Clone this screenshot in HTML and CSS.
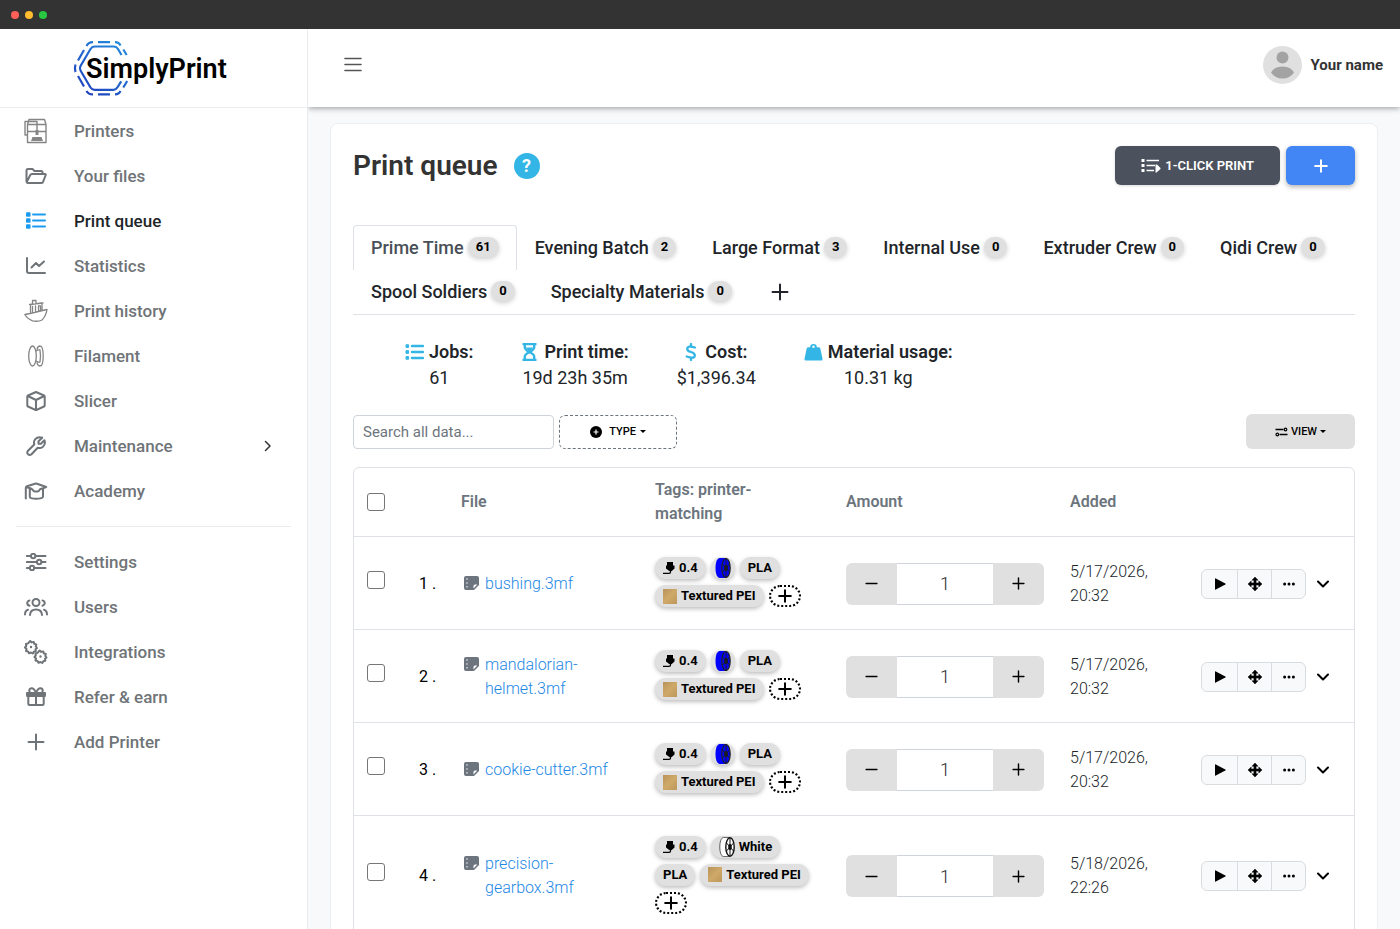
FILE: index.html
```html
<!DOCTYPE html>
<html lang="en">
<head>
    <meta charset="UTF-8" />
    <meta name="viewport" content="width=device-width, initial-scale=1.0" />
    <title>SimplyPrint - Print queue</title>
    <link rel="stylesheet" href="styles.css">
</head>
<body>
    <!-- Shared icons -->
    <svg class="sprite" aria-hidden="true">
        <symbol id="i-list" viewBox="0 0 20 18">
            <path d="M1 1.200h2.600v2.600H1zM1 7.200h2.600v2.600H1zM1 13.200h2.600v2.600H1z" fill="currentColor" stroke="currentColor" stroke-linejoin="round"/>
            <path d="M7 2.500h12M7 8.500h12M7 14.500h12" fill="none" stroke="currentColor" stroke-width="2" stroke-linecap="round"/>
        </symbol>
        <symbol id="i-list-bold" viewBox="0 0 19 16">
            <path d="M1 .8h2.600v2.600H1zM1 6.700h2.600v2.600H1zM1 12.600h2.600v2.600H1z" fill="currentColor" stroke="currentColor" stroke-linejoin="round"/>
            <path d="M7 2h11M7 8h11M7 14h11" fill="none" stroke="currentColor" stroke-width="2.500" stroke-linecap="round"/>
        </symbol>
        <symbol id="i-plus" viewBox="0 0 18 18">
            <path d="M9 1.500v15M1.500 9h15" fill="none" stroke="currentColor" stroke-width="2" stroke-linecap="round"/>
        </symbol>
        <symbol id="i-plus-bold" viewBox="0 0 18 18">
            <path d="M9 1.500v15M1.500 9h15" fill="none" stroke="currentColor" stroke-width="2.600" stroke-linecap="round"/>
        </symbol>
        <symbol id="i-minus" viewBox="0 0 18 18">
            <path d="M1.500 9h15" fill="none" stroke="currentColor" stroke-width="2" stroke-linecap="round"/>
        </symbol>
        <symbol id="i-file" viewBox="0 0 15 14">
            <path d="M2 0h11a2 2 0 0 1 2 2v7l-5 5H2a2 2 0 0 1-2-2V2a2 2 0 0 1 2-2z" fill="#6c757d"/>
            <path d="M13.300 8.500H11A1.500 1.500 0 0 0 9.500 10v2.500z" fill="#fff"/>
            <path d="M2.500 2.300h1v1.500h-1zM2.500 6.200h1v1.500h-1zM2.500 10.100h1v1.500h-1z" fill="#fff"/>
        </symbol>
        <symbol id="i-nozzle" viewBox="0 0 12 14">
            <path d="M4 1h6v3.500h1.500v3L8.800 10H6.200L3 7.500v-3h1z" fill="#000"/>
            <path d="M7.500 9.500V11q0 1.400-1.500 1.400H0" fill="none" stroke="#000" stroke-width="1.300"/>
        </symbol>
        <symbol id="i-spool-blue" viewBox="0 0 16 20">
            <path d="M4.500 0H11v20H4.500C1.500 19 .5 15 .5 10s1-9 4-10z" fill="#00f"/>
            <ellipse cx="11" cy="10" rx="4.200" ry="9.500" fill="#00f" stroke="#222" stroke-width="1.200"/>
            <ellipse cx="11" cy="10" rx="1.800" ry="3" fill="#111"/>
            <path d="M11 1v18M7.500 6l7 8M14.500 6l-7 8" stroke="#222" stroke-width="1"/>
        </symbol>
        <symbol id="i-spool-white" viewBox="0 0 16 20">
            <path d="M11 .4H4.500C2 1 .8 5 .8 10s1.200 9 3.700 9.600H11" fill="#fff" stroke="#333" stroke-width=".8"/>
            <ellipse cx="11" cy="10" rx="4.200" ry="9.300" fill="#fff" stroke="#111" stroke-width="1.400"/>
            <ellipse cx="11" cy="10" rx="1.800" ry="3" fill="#111"/>
            <path d="M11 1v18M7.500 6l7 8M14.500 6l-7 8" stroke="#111" stroke-width="1"/>
        </symbol>
        <symbol id="i-play" viewBox="0 0 12 12">
            <path d="M1 .8Q1 0 1.800.400l9.500 5q.8.600 0 1.200l-9.500 5Q1 12 1 11.200z" fill="#000"/>
        </symbol>
        <symbol id="i-move" viewBox="0 0 14 14">
            <path d="M7 0l3 3.200H8.100v2.700h2.700V4L14 7l-3.200 3V8.100H8.100v2.700H10L7 14l-3-3.200h1.900V8.100H3.200V10L0 7l3.200-3v1.900h2.700V3.200H4z" fill="#000" stroke="#000" stroke-width=".5" stroke-linejoin="round"/>
        </symbol>
        <symbol id="i-dots" viewBox="0 0 12 4">
            <circle cx="1.600" cy="2" r="1.500"/><circle cx="6" cy="2" r="1.500"/><circle cx="10.400" cy="2" r="1.500"/>
        </symbol>
        <symbol id="i-down" viewBox="0 0 12 8">
            <path d="M1 1.500l5 5 5-5" fill="none" stroke="#000" stroke-width="2" stroke-linecap="round" stroke-linejoin="round"/>
        </symbol>
    </svg>

    <div class="window-bar">
        <span class="dot red"></span>
        <span class="dot yellow"></span>
        <span class="dot green"></span>
    </div>

    <div class="app">
        <aside class="sidebar">
            <a href="#" class="logo">
                <svg width="160" height="60" viewBox="70 38 160 60" role="img" aria-label="SimplyPrint">
                    <defs>
                        <linearGradient id="logo-grad" gradientUnits="userSpaceOnUse" x1="84" y1="94" x2="120" y2="44">
                            <stop offset="0" stop-color="#1f3fbd"/>
                            <stop offset="1" stop-color="#2389dc"/>
                        </linearGradient>
                    </defs>
                    <g fill="none" stroke="url(#logo-grad)" stroke-width="2.200">
                        <path d="M121.500 55l-3.500-6q-1.500-2.500-4-2.500H94.500q-2.500 0-4 2.500L80.500 66q-1.300 2.300 0 4.500l10 17q1.500 2.300 4 2.300h19q2.500 0 4-2.500l3.700-6"/>
                        <path d="M98 42.100h12M86.500 46q2-4 6.500-3.900M115 42.100q4 0 5.500 3.400M123.300 49.500l3.400 5.500M84 50l-6 10.500M75.500 64.500q-1.300 4 0 7.500M78 76l6 10.500M86.500 91q2 3.500 6.500 3.400M98 94.400h12M115 94.400q4 0 5.500-3.400M123.300 87.500l3.900-6.500"/>
                    </g>
                    <text x="86" y="78" class="logo-text">SimplyPrint</text>
                </svg>
            </a>

            <nav class="menu">
                <a href="#">
                    <svg class="soft" viewBox="0 0 24 26" width="24" height="26"><path d="M3.500 6.500h18.500v18H3.500zM3.500 6.500L5 1.500h15.500l1.500 5M3.500 13.500H22M3 17H1V3.500h12V12" stroke-width="1.400"/><path d="M11.500 12h3v5h-3zM8.500 19h9l1.500 4H7z" fill="currentColor" stroke="none"/></svg>
                    <span>Printers</span>
                </a>
                <a href="#">
                    <svg viewBox="0 0 22 18" width="22" height="18"><path d="M1.500 14.500v-11Q1.500 2 3 2h4.500l2 2h6.500q1.500 0 1.500 1.500V7M1.700 15l3.600-7q.5-1 1.500-1H20q1 0 .7 1l-2.500 6.500q-.4 1.500-1.700 1.500H3q-1.300 0-1.500-1.500"/></svg>
                    <span>Your files</span>
                </a>
                <a href="#" class="active">
                    <svg class="blue" width="20" height="18"><use href="#i-list"/></svg>
                    <span>Print queue</span>
                </a>
                <a href="#">
                    <svg viewBox="0 0 20 18" width="20" height="18"><path d="M1 1v13q0 2 2 2h16M5.500 10.500L10 6l3 3 5-4.500"/></svg>
                    <span>Statistics</span>
                </a>
                <a href="#">
                    <svg class="soft" viewBox="0 0 24 24" width="24" height="24"><path d="M.8 15.500L6 14.500l17-4q-1 6.500-5 10.500-4 2-9.500.8Q3 19.500.8 15.500zM6.500 14V5.500L18 4v7.500M5.500 5.500L19 4M8.500 5V1.500h3.500v3M8.500 7.500v6M11.500 7v6M14.500 6.800h2v5h-2z" stroke-width="1.300"/></svg>
                    <span>Print history</span>
                </a>
                <a href="#">
                    <svg class="soft" viewBox="0 0 16 22" width="16" height="22"><ellipse cx="4.500" cy="11" rx="3.800" ry="10" stroke-width="1.300"/><path d="M8 6q2-1.500 4-1 1 6 0 12-2 .5-4-1M9 4q1-3 3-3 3.200 0 3.200 10T12 21q-2 0-3-3" stroke-width="1.300"/></svg>
                    <span>Filament</span>
                </a>
                <a href="#">
                    <svg viewBox="0 0 20 20" width="20" height="20"><path d="M10 1l8 3.500q.7.300.7 1v9q0 .7-.7 1L10 19.200l-8-3.700q-.7-.3-.7-1v-9q0-.7.7-1zM1.800 5L10 9l8.200-4M10 9v10"/></svg>
                    <span>Slicer</span>
                </a>
                <a href="#">
                    <svg viewBox="0 0 20 20" width="20" height="20"><path d="M16.200 1.700L12.500 5.300v2.400h2.400l3.500-3.500q1.500 4.300-1.700 6.800-2.300 1.700-5 .7l-6.200 6.500q-1.800 1.500-3.500 0-1.500-1.700 0-3.500L8.300 8.500Q7.300 5.500 9.300 3.200q2.700-3 6.900-1.500z"/></svg>
                    <span>Maintenance</span>
                    <svg class="caret" viewBox="0 0 8 12" width="8" height="12"><path d="M1.500 1.500L6 6l-4.500 4.500"/></svg>
                </a>
                <a href="#">
                    <svg viewBox="0 0 24 18" width="24" height="18"><path d="M1.800 16.500V6q0-1.300 1.200-1.700l8-2.600q1-.3 2 0L22.200 5 19 6.200M5.800 6v8.500q0 1.300 1.200 1.600 5 1.500 10.500 0 1.500-.4 1.500-1.600V6.200M3 5.200l4.500 1.600q1.300.8 2 2 2.500 1.500 5.500 0l1-1.500 3-1.100"/></svg>
                    <span>Academy</span>
                </a>
            </nav>

            <hr class="menu-line">

            <nav class="menu">
                <a href="#">
                    <svg viewBox="0 0 20 18" width="20" height="18"><path d="M.8 3h4M9.500 3h10M.8 9h10M15.500 9h4M.8 15h2.500M8.500 15h11"/><circle cx="7.200" cy="3" r="2.200"/><circle cx="13.200" cy="9" r="2.200"/><circle cx="6" cy="15" r="2.200"/></svg>
                    <span>Settings</span>
                </a>
                <a href="#">
                    <svg viewBox="0 0 24 18" width="24" height="18"><circle cx="12" cy="4.500" r="3.500"/><path d="M6 17q.3-5.500 6-5.500t6 5.500M5.500 7.800Q3 7 3.300 4.700 3.500 2.800 5.500 2.500M18.500 7.800q2.500-.8 2.200-3.100-.2-1.900-2.200-2.200M1 16.500q0-4 3-4.800M23 16.500q0-4-3-4.800"/></svg>
                    <span>Users</span>
                </a>
                <a href="#">
                    <svg viewBox="0 0 24 24" width="24" height="24"><g id="gear"><path d="M6.200 1.500l1.500 1.400 2-.5.600 2 2 .6-.5 2L13 8.500l-1.500 1.200.3 2-2 .5-1 1.800-1.800-1-2 .8-1-1.800-2-.5.500-2L1 8l1.300-1.500-.3-2 2-.6z" transform="translate(0 -.5)"/><circle cx="7" cy="7" r=".6" stroke-width="1.200"/></g><use href="#gear" x="9.500" y="9.500"/></svg>
                    <span>Integrations</span>
                </a>
                <a href="#">
                    <svg viewBox="0 0 20 20" width="20" height="20"><path d="M1.200 6h17.600v3H1.200zM2.300 9v7.500q0 1.500 1.500 1.500h12.400q1.500 0 1.500-1.500V9M10 6v12M10 6Q8 1 5.500 1.200 3 1.500 3.300 4q.2 1.500 1.700 2M10 6q2-5 4.500-4.800Q17 1.500 16.700 4q-.2 1.500-1.700 2"/><path d="M1.200 6h17.600v2.500H1.200z" fill="currentColor"/></svg>
                    <span>Refer &amp; earn</span>
                </a>
                <a href="#">
                    <svg width="18" height="18"><use href="#i-plus"/></svg>
                    <span>Add Printer</span>
                </a>
            </nav>
        </aside>

        <div class="main">
            <header class="topbar">
                <button class="hamburger" aria-label="Toggle menu">
                    <svg viewBox="0 0 18 16" width="18" height="16"><path d="M1 1.500h16M1 7.500h16M1 13.500h16" fill="none" stroke="#555" stroke-width="1.600" stroke-linecap="round"/></svg>
                </button>
                <a href="#" class="user">
                    <svg viewBox="0 0 39 38" width="39" height="38"><ellipse cx="19.500" cy="19" rx="19.500" ry="19" fill="#e0e0e0"/><circle cx="19.500" cy="11.500" r="6" fill="#a3a3a3"/><path d="M8 26.500Q11 20.500 19.500 20.500T31 26.500Q27 32.500 19.500 32.500T8 26.500z" fill="#a3a3a3"/></svg>
                    <span>Your name</span>
                </a>
            </header>

            <main class="card">
                <div class="card-head">
                    <h1>Print queue</h1>
                    <button class="help" aria-label="Help">?</button>
                    <div class="head-buttons">
                        <button class="btn-dark">
                            <svg viewBox="0 0 20 15" width="20" height="15"><path d="M.5 1h3v3h-3zM.5 6h3v3h-3zM.5 11h3v3h-3z" fill="#fff"/><path d="M5.500 2.500H18M5.500 7.500H14M5.500 12.500H13" stroke="#fff" stroke-width="1.500"/><path d="M14.500 6.500h1.500l3.500 3.500v1L15.500 14.500h-1z" fill="#fff"/></svg>
                            1-CLICK PRINT
                        </button>
                        <button class="btn-blue" aria-label="Add">
                            <svg width="14" height="14"><use href="#i-plus-bold"/></svg>
                        </button>
                    </div>
                </div>

                <div class="tabs">
                    <a href="#" class="tab active">Prime Time <span class="badge">61</span></a>
                    <a href="#" class="tab">Evening Batch <span class="badge">2</span></a>
                    <a href="#" class="tab">Large Format <span class="badge">3</span></a>
                    <a href="#" class="tab">Internal Use <span class="badge">0</span></a>
                    <a href="#" class="tab">Extruder Crew <span class="badge">0</span></a>
                    <a href="#" class="tab">Qidi Crew <span class="badge">0</span></a>
                    <a href="#" class="tab">Spool Soldiers <span class="badge">0</span></a>
                    <a href="#" class="tab">Specialty Materials <span class="badge">0</span></a>
                    <button class="tab tab-add" aria-label="Add queue"><svg width="18" height="18"><use href="#i-plus"/></svg></button>
                </div>

                <div class="stats">
                    <div class="stat">
                        <strong><svg width="19" height="16"><use href="#i-list-bold"/></svg>Jobs:</strong>
                        <span>61</span>
                    </div>
                    <div class="stat">
                        <strong><svg class="wide" viewBox="0 0 14 18" width="15" height="18"><path d="M0 0h14v2.300H0zM0 15.700h14V18H0z" fill="currentColor"/><path d="M2.300 2v2.500q0 2 4.700 4.500-4.700 2.500-4.700 4.500V16M11.700 2v2.500q0 2-4.700 4.500 4.700 2.500 4.700 4.500V16" fill="none" stroke="currentColor" stroke-width="2.400"/><path d="M3 4.500h8L7 8.500z" fill="currentColor"/></svg>Print time:</strong>
                        <span>19d 23h 35m</span>
                    </div>
                    <div class="stat">
                        <strong><svg class="wide" viewBox="0 0 12 18" width="12" height="18"><path d="M6 1v2.200M6 14.800V17M10 4.500Q2.300 2 2.200 6q0 2 3.800 3t3.800 3.200q-.2 4.300-8 1.300" fill="none" stroke="currentColor" stroke-width="2.300" stroke-linecap="round"/></svg>Cost:</strong>
                        <span>$1,396.34</span>
                    </div>
                    <div class="stat">
                        <strong><svg viewBox="0 0 20 18" width="19" height="18"><path d="M6.500 4a3.500 3.500 0 1 1 7 0h2q1.200 0 1.600 1l2.400 11q.3 2-1.500 2H2Q.2 18 .5 16L2.900 5q.4-1 1.600-1zM10 2.200a1.300 1.300 0 1 0 0 2.600 1.300 1.300 0 0 0 0-2.600z" fill="currentColor" fill-rule="evenodd"/></svg>Material usage:</strong>
                        <span>10.31 kg</span>
                    </div>
                </div>

                <div class="filters">
                    <input type="text" class="search" placeholder="Search all data..." aria-label="Search all data">
                    <button class="btn-type">
                        <svg viewBox="0 0 12 12" width="12" height="12"><circle cx="6" cy="6" r="6"/><path d="M6 3.500v5M3.500 6h5" stroke="#fff" stroke-width="1.200"/></svg>
                        TYPE
                        <span class="arrow"></span>
                    </button>
                    <button class="btn-view">
                        <svg viewBox="0 0 13 10" width="13" height="10"><path d="M.5 2.500h8M4.500 7.500h8" stroke="#000" stroke-width="1.300"/><circle cx="10.500" cy="2.500" r="1.300" fill="none" stroke="#000" stroke-width="1.200"/><circle cx="2.300" cy="7.500" r="1.300" fill="none" stroke="#000" stroke-width="1.200"/></svg>
                        VIEW
                        <span class="arrow"></span>
                    </button>
                </div>

                <div class="table-wrap">
                    <table>
                        <colgroup>
                            <col class="c-check"><col class="c-num"><col class="c-file"><col class="c-tags"><col class="c-amount"><col class="c-added"><col class="c-actions">
                        </colgroup>
                        <thead>
                            <tr>
                                <th><input type="checkbox" aria-label="Select all"></th>
                                <th></th>
                                <th>File</th>
                                <th class="th-tags">Tags: printer-matching</th>
                                <th>Amount</th>
                                <th>Added</th>
                                <th></th>
                            </tr>
                        </thead>
                        <tbody>
                            <tr>
                                <td><input type="checkbox" aria-label="Select bushing.3mf"></td>
                                <td class="num">1 .</td>
                                <td><div class="file"><svg width="15" height="14"><use href="#i-file"/></svg><a href="#">bushing.3mf</a></div></td>
                                <td>
                                    <div class="tags">
                                        <span class="tag"><svg width="12" height="14"><use href="#i-nozzle"/></svg>0.4</span>
                                        <span class="tag spool"><svg width="16" height="20"><use href="#i-spool-blue"/></svg></span>
                                        <span class="tag">PLA</span>
                                        <span class="tag"><i class="plate"></i>Textured PEI</span>
                                        <button class="tag-add" aria-label="Add tag"><svg width="14" height="14"><use href="#i-plus-bold"/></svg></button>
                                    </div>
                                </td>
                                <td>
                                    <div class="amount">
                                        <button aria-label="Less"><svg width="13" height="13"><use href="#i-minus"/></svg></button>
                                        <input type="text" value="1" aria-label="Amount">
                                        <button aria-label="More"><svg width="13" height="13"><use href="#i-plus"/></svg></button>
                                    </div>
                                </td>
                                <td class="added">5/17/2026, 20:32</td>
                                <td>
                                    <div class="actions">
                                        <div class="group">
                                            <button aria-label="Print"><svg width="12" height="12"><use href="#i-play"/></svg></button>
                                            <button aria-label="Move"><svg width="14" height="14"><use href="#i-move"/></svg></button>
                                            <button aria-label="More actions"><svg width="12" height="4"><use href="#i-dots"/></svg></button>
                                        </div>
                                        <button class="expand" aria-label="Expand"><svg width="12" height="8"><use href="#i-down"/></svg></button>
                                    </div>
                                </td>
                            </tr>
                            <tr>
                                <td><input type="checkbox" aria-label="Select mandalorian-helmet.3mf"></td>
                                <td class="num">2 .</td>
                                <td><div class="file"><svg width="15" height="14"><use href="#i-file"/></svg><a href="#">mandalorian-helmet.3mf</a></div></td>
                                <td>
                                    <div class="tags">
                                        <span class="tag"><svg width="12" height="14"><use href="#i-nozzle"/></svg>0.4</span>
                                        <span class="tag spool"><svg width="16" height="20"><use href="#i-spool-blue"/></svg></span>
                                        <span class="tag">PLA</span>
                                        <span class="tag"><i class="plate"></i>Textured PEI</span>
                                        <button class="tag-add" aria-label="Add tag"><svg width="14" height="14"><use href="#i-plus-bold"/></svg></button>
                                    </div>
                                </td>
                                <td>
                                    <div class="amount">
                                        <button aria-label="Less"><svg width="13" height="13"><use href="#i-minus"/></svg></button>
                                        <input type="text" value="1" aria-label="Amount">
                                        <button aria-label="More"><svg width="13" height="13"><use href="#i-plus"/></svg></button>
                                    </div>
                                </td>
                                <td class="added">5/17/2026, 20:32</td>
                                <td>
                                    <div class="actions">
                                        <div class="group">
                                            <button aria-label="Print"><svg width="12" height="12"><use href="#i-play"/></svg></button>
                                            <button aria-label="Move"><svg width="14" height="14"><use href="#i-move"/></svg></button>
                                            <button aria-label="More actions"><svg width="12" height="4"><use href="#i-dots"/></svg></button>
                                        </div>
                                        <button class="expand" aria-label="Expand"><svg width="12" height="8"><use href="#i-down"/></svg></button>
                                    </div>
                                </td>
                            </tr>
                            <tr>
                                <td><input type="checkbox" aria-label="Select cookie-cutter.3mf"></td>
                                <td class="num">3 .</td>
                                <td><div class="file"><svg width="15" height="14"><use href="#i-file"/></svg><a href="#">cookie-cutter.3mf</a></div></td>
                                <td>
                                    <div class="tags">
                                        <span class="tag"><svg width="12" height="14"><use href="#i-nozzle"/></svg>0.4</span>
                                        <span class="tag spool"><svg width="16" height="20"><use href="#i-spool-blue"/></svg></span>
                                        <span class="tag">PLA</span>
                                        <span class="tag"><i class="plate"></i>Textured PEI</span>
                                        <button class="tag-add" aria-label="Add tag"><svg width="14" height="14"><use href="#i-plus-bold"/></svg></button>
                                    </div>
                                </td>
                                <td>
                                    <div class="amount">
                                        <button aria-label="Less"><svg width="13" height="13"><use href="#i-minus"/></svg></button>
                                        <input type="text" value="1" aria-label="Amount">
                                        <button aria-label="More"><svg width="13" height="13"><use href="#i-plus"/></svg></button>
                                    </div>
                                </td>
                                <td class="added">5/17/2026, 20:32</td>
                                <td>
                                    <div class="actions">
                                        <div class="group">
                                            <button aria-label="Print"><svg width="12" height="12"><use href="#i-play"/></svg></button>
                                            <button aria-label="Move"><svg width="14" height="14"><use href="#i-move"/></svg></button>
                                            <button aria-label="More actions"><svg width="12" height="4"><use href="#i-dots"/></svg></button>
                                        </div>
                                        <button class="expand" aria-label="Expand"><svg width="12" height="8"><use href="#i-down"/></svg></button>
                                    </div>
                                </td>
                            </tr>
                            <tr>
                                <td><input type="checkbox" aria-label="Select precision-gearbox.3mf"></td>
                                <td class="num">4 .</td>
                                <td><div class="file"><svg width="15" height="14"><use href="#i-file"/></svg><a href="#">precision-gearbox.3mf</a></div></td>
                                <td>
                                    <div class="tags">
                                        <span class="tag"><svg width="12" height="14"><use href="#i-nozzle"/></svg>0.4</span>
                                        <span class="tag"><svg width="16" height="20"><use href="#i-spool-white"/></svg>White</span>
                                        <span class="tag">PLA</span>
                                        <span class="tag"><i class="plate"></i>Textured PEI</span>
                                        <button class="tag-add" aria-label="Add tag"><svg width="14" height="14"><use href="#i-plus-bold"/></svg></button>
                                    </div>
                                </td>
                                <td>
                                    <div class="amount">
                                        <button aria-label="Less"><svg width="13" height="13"><use href="#i-minus"/></svg></button>
                                        <input type="text" value="1" aria-label="Amount">
                                        <button aria-label="More"><svg width="13" height="13"><use href="#i-plus"/></svg></button>
                                    </div>
                                </td>
                                <td class="added">5/18/2026, 22:26</td>
                                <td>
                                    <div class="actions">
                                        <div class="group">
                                            <button aria-label="Print"><svg width="12" height="12"><use href="#i-play"/></svg></button>
                                            <button aria-label="Move"><svg width="14" height="14"><use href="#i-move"/></svg></button>
                                            <button aria-label="More actions"><svg width="12" height="4"><use href="#i-dots"/></svg></button>
                                        </div>
                                        <button class="expand" aria-label="Expand"><svg width="12" height="8"><use href="#i-down"/></svg></button>
                                    </div>
                                </td>
                            </tr>
                        </tbody>
                    </table>
                </div>
            </main>
        </div>
    </div>
</body>
</html>
```

FILE: styles.css
```css
* {
    box-sizing: border-box;
}

body {
    margin: 0;
    height: 100vh;
    display: flex;
    flex-direction: column;
    overflow: hidden;
    font-family: Roboto, "Liberation Sans", sans-serif;
    font-size: 16px;
    line-height: 24px;
    color: #212529;
    background: #f8f9fb;
}

a {
    color: inherit;
    text-decoration: none;
}

button {
    font-family: inherit;
    border: none;
    padding: 0;
    background: none;
    color: #000;
    cursor: pointer;
    display: flex;
    align-items: center;
    justify-content: center;
}

svg {
    flex-shrink: 0;
}

.sprite {
    display: none;
}

.window-bar {
    height: 29px;
    flex-shrink: 0;
    background: #333;
    display: flex;
    align-items: center;
    gap: 6px;
    padding: 0 11px;
}

.dot {
    width: 8px;
    height: 8px;
    border-radius: 50%;
}

.red {
    background: #ff5f57;
}

.yellow {
    background: #febc2e;
}

.green {
    background: #28c840;
}

.app {
    flex: 1;
    min-height: 0;
    display: flex;
}

/* Sidebar */
.sidebar {
    width: 308px;
    flex-shrink: 0;
    background: #fff;
    border-right: 1px solid #e9ebee;
}

.logo {
    height: 79px;
    display: flex;
    align-items: center;
    justify-content: center;
    padding-right: 8px;
    border-bottom: 1px solid #e9ebee;
}

.logo-text {
    font-size: 27px;
    font-weight: 600;
    fill: #000;
}

.menu a {
    height: 45px;
    display: flex;
    align-items: center;
    padding: 0 35px 0 22px;
    font-size: 17px;
    font-weight: 500;
    color: #6f7478;
}

    .menu a > svg {
        fill: none;
        stroke: currentColor;
        stroke-width: 2;
        stroke-linejoin: round;
        stroke-linecap: round;
        width: 28px;
    }

    .menu a > .soft {
        color: #858585;
    }

    .menu a span {
        margin-left: 24px;
    }

    .menu a > .caret {
        width: 8px;
        margin-left: auto;
        color: #333;
        stroke-width: 1.5;
    }

    .menu a.active {
        color: #212529;
    }

    .menu a > .blue {
        color: #1d9bf0;
        stroke: none;
    }

.menu-line {
    margin: 13px 16px 12px;
    border: none;
    border-top: 1px solid #e9ebee;
}

/* Header */
.main {
    flex: 1;
    min-width: 0;
    overflow: hidden;
}

.topbar {
    height: 78px;
    background: #fff;
    display: flex;
    align-items: center;
    justify-content: space-between;
    padding: 0 17px 6px 36px;
    box-shadow: 0 1px 6px rgba(0, 0, 0, 0.4);
}

.user {
    display: flex;
    align-items: center;
    gap: 9px;
    font-size: 15px;
    font-weight: 700;
    color: #333;
}

.card {
    margin: 16px 22px 0;
    padding: 22px;
    background: #fff;
    border: 1px solid #eceef1;
    border-radius: 8px;
}

.card-head {
    display: flex;
    align-items: center;
    margin-bottom: 40px;
}

    .card-head h1 {
        margin: 0;
        font-size: 28px;
        line-height: 36px;
        font-weight: 600;
        color: #333;
    }

.help {
    width: 26px;
    height: 26px;
    margin-left: 16px;
    border-radius: 50%;
    background: #33b5e5;
    color: #fff;
    font-size: 18px;
    font-weight: 700;
}

.head-buttons {
    display: flex;
    gap: 6px;
    margin-left: auto;
}

.btn-dark {
    height: 39px;
    padding: 0 26px;
    gap: 4px;
    border-radius: 6px;
    background: #4b515d;
    color: #fff;
    font-size: 13px;
    font-weight: 600;
    box-shadow: 0 1px 3px rgba(0, 0, 0, 0.15);
}

.btn-blue {
    width: 69px;
    height: 39px;
    border-radius: 6px;
    background: #4285f4;
    color: #fff;
    box-shadow: 0 2px 5px rgba(0, 0, 0, 0.3);
}

/* Tabs */
.tabs {
    display: flex;
    flex-wrap: wrap;
    padding-bottom: 1px;
    border-bottom: 1px solid #dee2e6;
}

.tab {
    height: 45px;
    margin-bottom: -1px;
    padding: 0 17px;
    display: flex;
    align-items: center;
    gap: 4px;
    border: 1px solid transparent;
    border-bottom: none;
    border-radius: 4px 4px 0 0;
    font-size: 18px;
    font-weight: 500;
}

    .tab.active {
        color: #495057;
        border-color: #dee2e6;
    }

.tab-add {
    padding: 0 20px;
    color: #212529;
}

.badge {
    height: 20px;
    padding: 0 8px;
    margin-bottom: 3px;
    border-radius: 10px;
    background: #e0e0e0;
    color: #000;
    font-size: 13px;
    line-height: 20px;
    font-weight: 700;
    box-shadow: 0 2px 5px rgba(0, 0, 0, 0.2);
}

/* Totals */
.stats {
    display: flex;
    gap: 48px;
    padding: 24px 52px 23px;
    font-size: 18px;
    line-height: 26px;
}

.stat {
    display: flex;
    flex-direction: column;
    align-items: center;
}

    .stat strong {
        display: flex;
        align-items: center;
        gap: 5px;
        font-weight: 600;
    }

    .stat svg {
        color: #33b5e5;
    }

    .stat .wide {
        margin-right: 3px;
    }

.filters {
    display: flex;
    align-items: center;
    gap: 5px;
    margin-bottom: 18px;
}

.search {
    width: 201px;
    height: 34px;
    padding: 0 9px;
    border: 1px solid #ced4da;
    border-radius: 4px;
    font-family: inherit;
    font-size: 15px;
    color: #495057;
}

    .search::placeholder {
        color: #6c757d;
    }

.btn-type {
    width: 118px;
    height: 34px;
    gap: 4px;
    border: 1px dashed #6c757d;
    border-radius: 6px;
    font-size: 11px;
    font-weight: 500;
}

    .btn-type svg {
        margin-right: 3px;
    }

.btn-view {
    width: 109px;
    height: 35px;
    gap: 3px;
    margin-left: auto;
    border-radius: 6px;
    background: #e0e0e0;
    font-size: 11px;
    font-weight: 500;
}

.arrow {
    border: 3px solid transparent;
    border-top-color: #000;
    border-bottom: none;
}

/* Queue table */
.table-wrap {
    border: 1px solid #dee2e6;
    border-radius: 6px;
}

table {
    width: 100%;
    table-layout: fixed;
    border-collapse: collapse;
}

.c-check {
    width: 53px;
}

.c-num {
    width: 42px;
}

.c-file {
    width: 194px;
}

.c-tags {
    width: 191px;
}

.c-amount {
    width: 224px;
}

.c-added {
    width: 131px;
}

.c-actions {
    width: 165px;
}

th {
    height: 68px;
    padding: 0 12px;
    text-align: left;
    font-weight: 600;
    color: #6c757d;
}

.th-tags {
    padding-right: 48px;
}

td {
    height: 93px;
    padding: 20px 12px 18px;
    border-top: 1px solid #dee2e6;
}

input[type="checkbox"] {
    display: block;
    appearance: none;
    width: 18px;
    height: 18px;
    margin: 0 0 0 1px;
    border: 1px solid #767676;
    border-radius: 3px;
    background: #fff;
}

td input[type="checkbox"] {
    margin-bottom: 8px;
}

.num {
    color: #000;
    white-space: nowrap;
}

.file {
    display: flex;
    align-items: flex-start;
    gap: 6px;
    padding-left: 3px;
}

    .file svg {
        margin-top: 4px;
    }

    .file a {
        max-width: 130px;
        font-weight: 300;
        color: #1e88e5;
    }

.tags {
    display: flex;
    flex-wrap: wrap;
    gap: 6px 5px;
    margin-bottom: 3px;
}

.tag {
    height: 22px;
    padding: 0 8px;
    display: flex;
    align-items: center;
    gap: 4px;
    border-radius: 11px;
    background: #e0e0e0;
    color: #000;
    font-size: 13px;
    line-height: 22px;
    font-weight: 700;
    box-shadow: 0 2px 4px rgba(0, 0, 0, 0.25);
}

.spool {
    padding: 0 4px;
}

.plate {
    width: 14px;
    height: 15px;
    background: linear-gradient(135deg, #b8935a, #cfa968 50%, #bd975c);
}

.tag-add {
    width: 32px;
    height: 22px;
    border: 2px dotted #000;
    border-radius: 11px;
}

.amount {
    display: flex;
    width: 198px;
    height: 42px;
}

    .amount button {
        width: 51px;
        background: #e0e0e0;
        border-radius: 6px 0 0 6px;
    }

    .amount input + button {
        border-radius: 0 6px 6px 0;
    }

    .amount input {
        flex: 1;
        min-width: 0;
        padding: 0;
        border: 1px solid #ced4da;
        border-width: 1px 0;
        text-align: center;
        font-family: inherit;
        font-size: 18px;
        font-weight: 300;
        color: #212529;
    }

.added {
    font-weight: 300;
}

.actions {
    display: flex;
    align-items: center;
    gap: 11px;
}

.group {
    display: flex;
    height: 30px;
    border: 1px solid #d9dcdf;
    border-radius: 6px;
    background: #f8f9fa;
}

    .group button {
        width: 35px;
    }

    .group button + button {
        width: 34px;
        border-left: 1px solid #d9dcdf;
    }
```
